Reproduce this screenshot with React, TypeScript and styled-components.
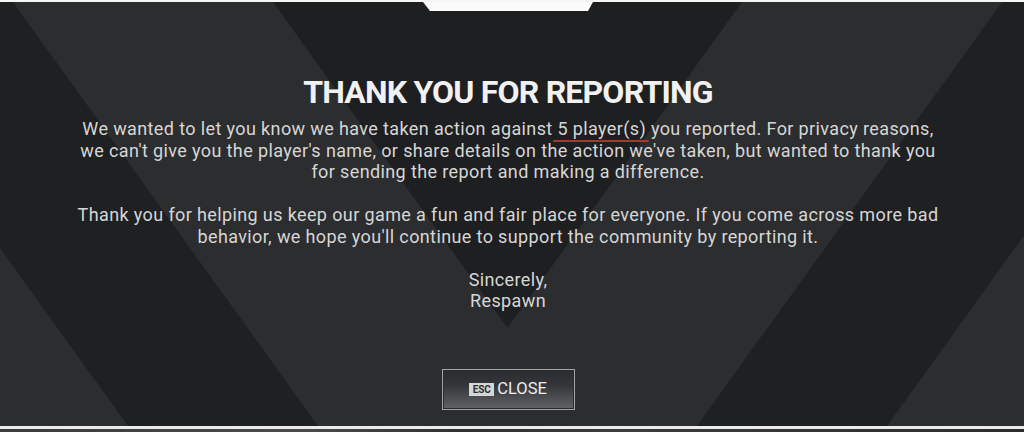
import React from "react";
import styled, { createGlobalStyle } from "styled-components";

const Global = createGlobalStyle`
  html, body { margin: 0; padding: 0; }
  body {
    width: 1024px;
    height: 432px;
    overflow: hidden;
    background: #f6f6f4;
    font-family: Roboto, "Liberation Sans", sans-serif;
  }
`;

const Page = styled.div`
  display: flex;
  flex-direction: column;
  width: 1024px;
  height: 432px;
  padding-top: 2px;
  box-sizing: border-box;
`;

const Panel = styled.section`
  position: relative;
  height: 424px;
  background: #2c2d2f;
  overflow: hidden;
  display: flex;
  flex-direction: column;
  align-items: center;
  padding: 71px 8px 0 0;
  box-sizing: border-box;
`;

const Backdrop = styled.svg`
  position: absolute;
  left: 0;
  top: 0;
  width: 1024px;
  height: 424px;
  z-index: 0;
`;

const Notch = styled.svg`
  position: absolute;
  left: 0;
  top: 0;
  width: 1024px;
  height: 12px;
  z-index: 2;
`;

const Content = styled.div`
  position: relative;
  z-index: 1;
  display: flex;
  flex-direction: column;
  align-items: center;
  text-align: center;
`;

const Title = styled.h1`
  margin: 0;
  font-size: 32px;
  line-height: 38px;
  font-weight: 700;
  color: #f1f1f1;
  letter-spacing: -0.8px;
`;

const Body = styled.div`
  margin-top: 7px;
  display: flex;
  flex-direction: column;
  gap: 21.5px;
  font-size: 18px;
  line-height: 21.5px;
  letter-spacing: 0.38px;
  color: #d6d6d6;
`;

const Paragraph = styled.p`
  margin: 0;
`;

const Line = styled.span`
  display: block;
  white-space: nowrap;
`;

const Marked = styled.span`
  position: relative;
  &::after {
    content: "";
    position: absolute;
    left: -4px;
    right: -3px;
    bottom: -3px;
    height: 2px;
    border-radius: 1px;
    background: #a9372c;
  }
`;

const CloseButton = styled.button`
  margin-top: 57px;
  width: 133px;
  height: 41px;
  display: flex;
  align-items: center;
  justify-content: center;
  gap: 3px;
  padding: 0;
  border: 1px solid #a3a4a6;
  box-shadow: inset 0 0 0 1px #2a2b2d;
  background: linear-gradient(to bottom, #2b2c2e 0%, #35363a 40%, #626366 100%);
  cursor: pointer;
  font-family: inherit;
`;

const KeyBadge = styled.span`
  display: inline-flex;
  align-items: center;
  justify-content: center;
  width: 25px;
  height: 13px;
  background: #d6d6d6;
  color: #2e2f31;
  font-size: 10px;
  font-weight: 700;
  line-height: 13px;
  letter-spacing: -0.2px;
`;

const ButtonLabel = styled.span`
  font-size: 16.5px;
  line-height: 20px;
  color: #ececec;
  font-weight: 400;
`;

const BottomEdge = styled.div`
  height: 3px;
  background: #ebebe7;
`;

const BottomShade = styled.div`
  height: 3px;
  background: linear-gradient(to right, #3a3b3d 0%, #4a4b4d 30%, #2f3032 45%, #3b3c3e 60%, #2c2d2f 100%);
`;

export default function App() {
  return (
    <>
      <Global />
      <Page>
        <Panel>
          <Backdrop viewBox="0 2 1024 424" preserveAspectRatio="none">
            <polygon points="-177,2 13,2 318,426 128,426" fill="#1f2022" />
            <polygon points="273,2 742,2 507.5,328" fill="#1e1f21" />
            <polygon points="1002,2 1192,2 887,426 697,426" fill="#1f2022" />
          </Backdrop>
          <Notch viewBox="0 0 1024 12">
            <polygon points="423,0 593,0 588,9 430,9" fill="#fbfbfb" />
          </Notch>
          <Content>
            <Title>THANK YOU FOR REPORTING</Title>
            <Body>
              <Paragraph>
                <Line>
                  We wanted to let you know we have taken action against{" "}
                  <Marked>5 player(s)</Marked> you reported. For privacy reasons,
                </Line>
                <Line>
                  we can't give you the player's name, or share details on the action we've taken, but wanted to thank you
                </Line>
                <Line>for sending the report and making a difference.</Line>
              </Paragraph>
              <Paragraph>
                <Line>
                  Thank you for helping us keep our game a fun and fair place for everyone. If you come across more bad
                </Line>
                <Line>behavior, we hope you'll continue to support the community by reporting it.</Line>
              </Paragraph>
              <Paragraph>
                <Line>Sincerely,</Line>
                <Line>Respawn</Line>
              </Paragraph>
            </Body>
            <CloseButton type="button">
              <KeyBadge>ESC</KeyBadge>
              <ButtonLabel>CLOSE</ButtonLabel>
            </CloseButton>
          </Content>
        </Panel>
        <BottomEdge />
        <BottomShade />
      </Page>
    </>
  );
}
